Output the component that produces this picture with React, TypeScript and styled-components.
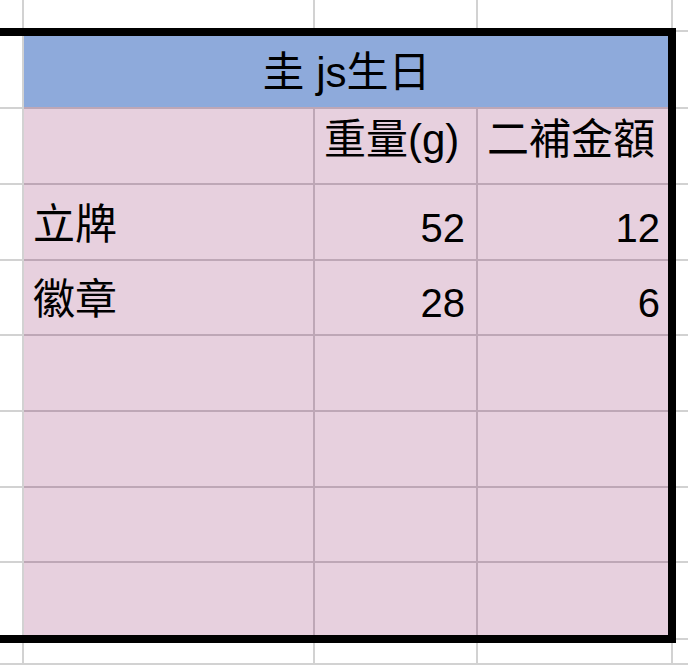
import React from "react"
import styled, { createGlobalStyle } from "styled-components"

const GlobalStyle = createGlobalStyle`
  html, body {
    margin: 0;
    padding: 0;
    background: #ffffff;
  }
  body {
    font-family: "Liberation Sans", "Noto Sans CJK TC", sans-serif;
    color: #000000;
  }
`

type Tone = "plain" | "pink" | "blue"

interface ItemRow {
  label: string
  weight: string
  price: string
}

const items: ItemRow[] = [
  { label: "立牌", weight: "52", price: "12" },
  { label: "徽章", weight: "28", price: "6" },
  { label: "", weight: "", price: "" },
  { label: "", weight: "", price: "" },
  { label: "", weight: "", price: "" },
  { label: "", weight: "", price: "" },
]

const EDGE_COLS = 5

export default function App() {
  return (
    <>
      <GlobalStyle />
      <Sheet>
        {Array.from({ length: EDGE_COLS }).map((_, i) => (
          <Cell key={"top" + i} $tone="plain" />
        ))}

        <Cell $tone="plain" />
        <TitleCell $tone="blue" $align="center">
          圭 js生日
        </TitleCell>
        <Cell $tone="plain" />

        <Cell $tone="plain" />
        <Cell $tone="pink" />
        <HeadCell $tone="pink">重量(g)</HeadCell>
        <HeadCell $tone="pink">二補金額</HeadCell>
        <Cell $tone="plain" />

        {items.map((row, i) => (
          <React.Fragment key={i}>
            <Cell $tone="plain" />
            <Cell $tone="pink">{row.label}</Cell>
            <NumCell $tone="pink" $align="right">
              {row.weight}
            </NumCell>
            <NumCell $tone="pink" $align="right">
              {row.price}
            </NumCell>
            <Cell $tone="plain" />
          </React.Fragment>
        ))}

        {Array.from({ length: EDGE_COLS }).map((_, i) => (
          <Cell key={"bottom" + i} $tone="plain" />
        ))}

        <RangeBorder />
      </Sheet>
    </>
  )
}

const Sheet = styled.div`
  position: relative;
  width: 688px;
  height: 665px;
  overflow: hidden;
  display: grid;
  grid-template-columns: 24px 291px 163px 195px 1fr;
  grid-template-rows: 32px 77px 76px 76px 75px 76px 76px 75px 77px 1fr;
  background: #ffffff;
`

const toneBg: Record<Tone, string> = {
  plain: "#ffffff",
  pink: "#e7d0de",
  blue: "#8eaadb",
}

const toneLine: Record<Tone, string> = {
  plain: "#d2d2d2",
  pink: "#bea7b6",
  blue: "#bea7b6",
}

const Cell = styled.div<{
  $tone: Tone
  $align?: "left" | "right" | "center"
}>`
  box-sizing: border-box;
  display: flex;
  align-items: flex-end;
  justify-content: ${(p) =>
    p.$align === "right"
      ? "flex-end"
      : p.$align === "center"
      ? "center"
      : "flex-start"};
  padding: 0 11px 11px 9px;
  background: ${(p) => toneBg[p.$tone]};
  border-right: 2px solid ${(p) => toneLine[p.$tone]};
  border-bottom: 2px solid ${(p) => toneLine[p.$tone]};
  font-size: 42px;
  line-height: 46px;
  white-space: nowrap;
  overflow: hidden;
`

const NumCell = styled(Cell)`
  font-size: 40px;
  padding-bottom: 8px;
`

const HeadCell = styled(Cell)`
  padding-bottom: 20px;
`

const TitleCell = styled(Cell)`
  grid-column: span 3;
  font-size: 42px;
  padding-bottom: 11px;
`

const RangeBorder = styled.div`
  position: absolute;
  left: -20px;
  top: 28px;
  width: 696px;
  height: 615px;
  box-sizing: border-box;
  border: 8px solid #000000;
  pointer-events: none;
`
